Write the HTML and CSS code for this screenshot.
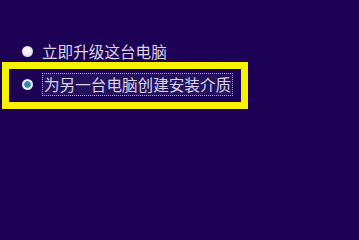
FILE: index.html
```html
<!DOCTYPE html>
<html lang="zh-CN">
<head>
<meta charset="utf-8">
<link rel="stylesheet" href="styles.css">
</head>
<body>
<div class="page">
  <div class="option">
    <span class="radio"></span>
    <span class="label">立即升级这台电脑</span>
  </div>
  <div class="highlight">
    <div class="option selected">
      <span class="radio checked"></span>
      <span class="label focus">为另一台电脑创建安装介质</span>
    </div>
  </div>
</div>
</body>
</html>
```
FILE: styles.css
```css
html, body {
  margin: 0;
  padding: 0;
  background: #1c0154;
  width: 359px;
  height: 235px;
  overflow: hidden;
}
.page {
  padding: 40px 0 0 2px;
  font-family: "Noto Sans CJK SC", "Noto Sans", sans-serif;
  font-size: 15.6px;
  color: #d8d5e8;
}
.option {
  display: flex;
  align-items: center;
  height: 22px;
  padding-left: 20px;
  gap: 9px;
}
.radio {
  width: 11px;
  height: 11px;
  border-radius: 50%;
  background: radial-gradient(circle at 45% 40%, #ffffff 0%, #e6e4ee 55%, #b9b6c8 100%);
  flex: none;
}
.radio.checked {
  background: radial-gradient(circle, #2f86a4 0%, #3d8fa8 38%, #e8eef2 48%, #d4d8e2 100%);
}
.label {
  line-height: 21px;
  white-space: nowrap;
}
.highlight {
  width: 246px;
  box-sizing: border-box;
  border: 7px solid #f7f200;
  padding: 4px 0 6px 0;
}
.highlight .option {
  padding-left: 13px;
  height: 23px;
}
.focus {
  border: 1px dotted #a8a4c4;
  padding: 0 1px;
  background: #25105e;
  line-height: 21px;
}
```
